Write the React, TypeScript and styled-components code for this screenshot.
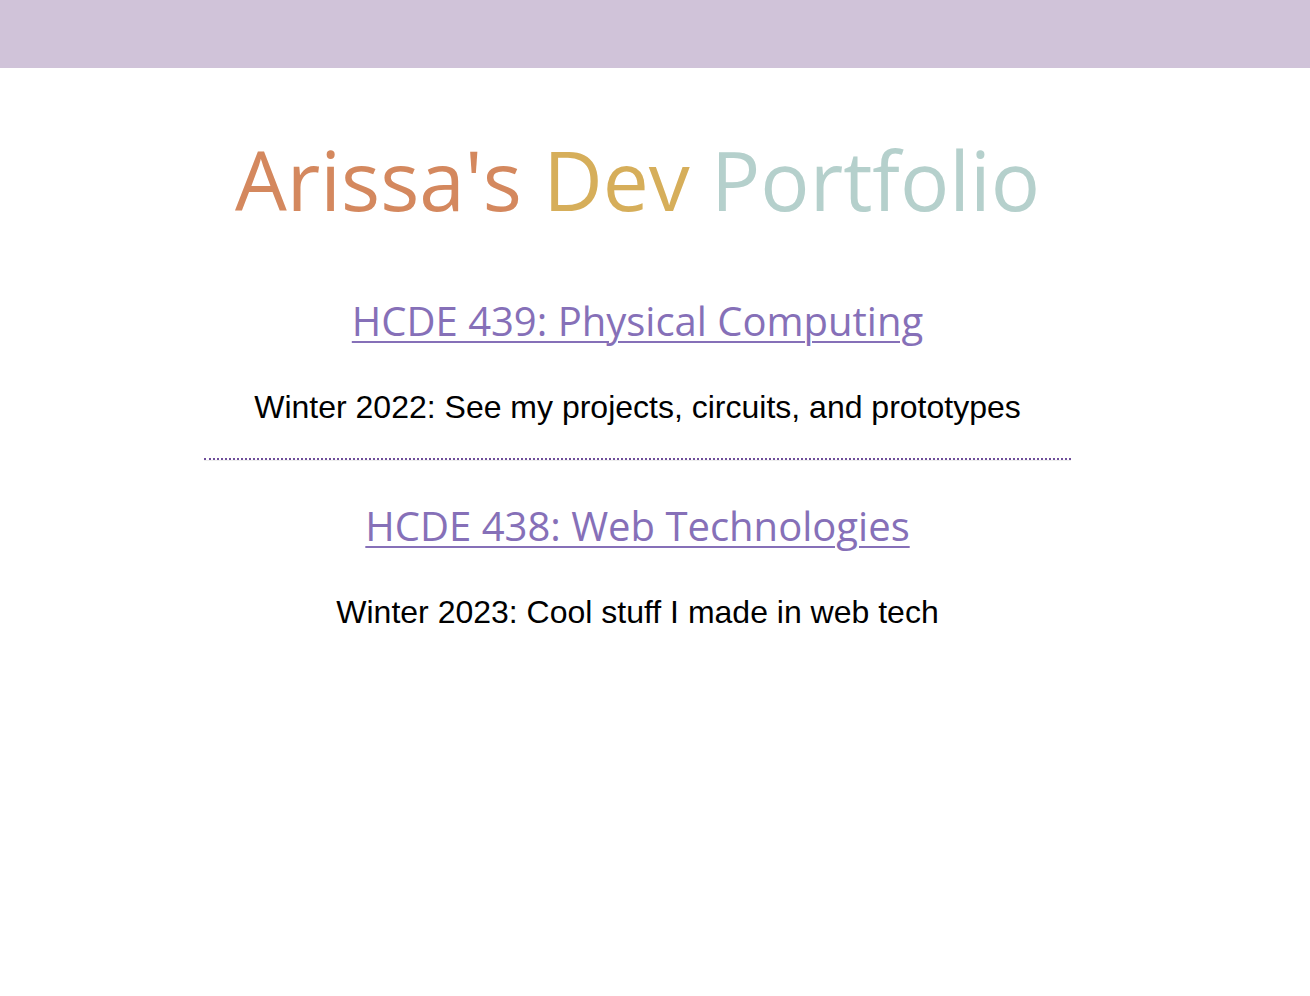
import React from "react";
import styled, { createGlobalStyle } from "styled-components";

const Global = createGlobalStyle`
  html, body { margin: 0; padding: 0; background: #ffffff; }
  body { font-family: "Liberation Sans", Arial, sans-serif; }
`;

const TopBar = styled.header`
  height: 68px;
  background: #d0c3d9;
`;

const Main = styled.main`
  width: 1275px;
  text-align: center;
  padding-top: 1px;
`;

const Title = styled.h1`
  margin: 60px 0 67px;
  font-family: "Open Sans", sans-serif;
  font-weight: 400;
  font-size: 82px;
  line-height: 100px;
  letter-spacing: 0;
`;

const Word = styled.span<{ $color: string }>`
  color: ${(p) => p.$color};
`;

const Section = styled.section`
  display: flex;
  flex-direction: column;
  align-items: center;
`;

const CourseLink = styled.a`
  font-family: "Open Sans", sans-serif;
  font-size: 40px;
  line-height: 50px;
  color: #8670b8;
  text-decoration: underline;
  text-decoration-thickness: 2px;
  text-underline-offset: 5px;
`;

const Blurb = styled.p`
  margin: 43px 0 0;
  font-size: 32px;
  line-height: 36px;
  color: #000;
`;

const Divider = styled.hr`
  width: 68%;
  margin: 33px auto 40px;
  border: none;
  border-top: 2px dotted #6f4e9a;
  border-bottom: 1px solid #eeeeee;
  height: 0;
`;

export default function App() {
  return (
    <>
      <Global />
      <TopBar />
      <Main>
        <Title>
          <Word $color="#d4885e">Arissa's</Word> <Word $color="#d6ae5a">Dev</Word>{" "}
          <Word $color="#b5d0cc">Portfolio</Word>
        </Title>
        <Section>
          <CourseLink href="#">HCDE 439: Physical Computing</CourseLink>
          <Blurb>Winter 2022: See my projects, circuits, and prototypes</Blurb>
        </Section>
        <Divider />
        <Section>
          <CourseLink href="#">HCDE 438: Web Technologies</CourseLink>
          <Blurb>Winter 2023: Cool stuff I made in web tech</Blurb>
        </Section>
      </Main>
    </>
  );
}
